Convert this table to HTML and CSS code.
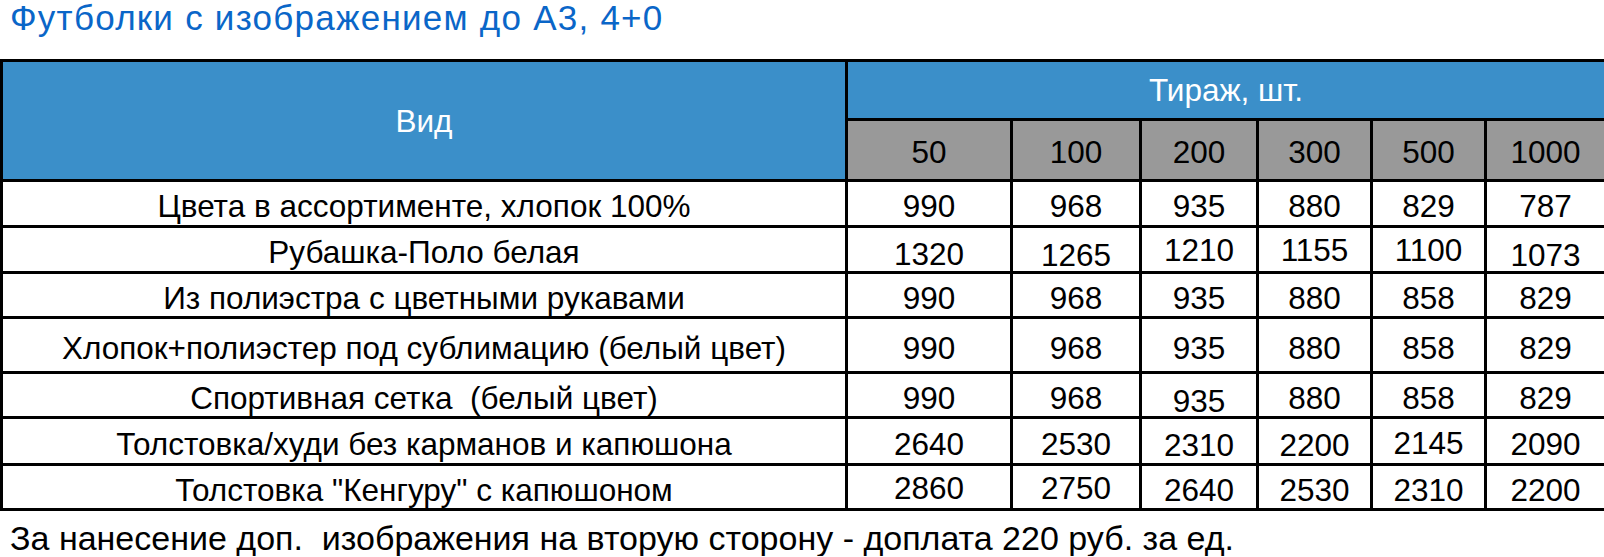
FILE: index.html
```html
<!DOCTYPE html>
<html lang="ru">
<head>
<meta charset="utf-8">
<title>Футболки с изображением до А3, 4+0</title>
<link rel="stylesheet" href="styles.css">
</head>
<body>
<div class="page">
  <h1 class="title">Футболки с изображением до А3, 4+0</h1>
  <table class="price">
    <colgroup>
      <col class="c-name">
      <col class="c50">
      <col class="c100">
      <col class="c200">
      <col class="c300">
      <col class="c500">
      <col class="c1000">
    </colgroup>
    <thead>
      <tr class="r-head1">
        <th class="h-blue" rowspan="2">Вид</th>
        <th class="h-blue" colspan="6">Тираж, шт.</th>
      </tr>
      <tr class="r-head2">
        <th class="h-gray">50</th>
        <th class="h-gray">100</th>
        <th class="h-gray">200</th>
        <th class="h-gray">300</th>
        <th class="h-gray">500</th>
        <th class="h-gray">1000</th>
      </tr>
    </thead>
    <tbody>
      <tr class="r-std">
        <td class="name">Цвета в ассортименте, хлопок 100%</td>
        <td>990</td><td>968</td><td>935</td><td>880</td><td>829</td><td>787</td>
      </tr>
      <tr class="r-std2">
        <td class="name">Рубашка-Поло белая</td>
        <td class="lo1">1320</td><td class="lo2">1265</td><td class="hi">1210</td><td class="hi">1155</td><td class="hi">1100</td><td class="lo2">1073</td>
      </tr>
      <tr class="r-short">
        <td class="name">Из полиэстра с цветными рукавами</td>
        <td>990</td><td>968</td><td>935</td><td>880</td><td>858</td><td>829</td>
      </tr>
      <tr class="r-tall">
        <td class="name">Хлопок+полиэстер под сублимацию (белый цвет)</td>
        <td>990</td><td>968</td><td>935</td><td>880</td><td>858</td><td>829</td>
      </tr>
      <tr class="r-short">
        <td class="name">Спортивная сетка  (белый цвет)</td>
        <td>990</td><td>968</td><td class="lo2">935</td><td>880</td><td>858</td><td>829</td>
      </tr>
      <tr class="r-mid">
        <td class="name">Толстовка/худи без карманов и капюшона</td>
        <td>2640</td><td>2530</td><td class="lo0">2310</td><td class="lo0">2200</td><td class="hi0">2145</td><td>2090</td>
      </tr>
      <tr class="r-short">
        <td class="name">Толстовка "Кенгуру" с капюшоном</td>
        <td class="hi">2860</td><td class="hi">2750</td><td>2640</td><td>2530</td><td>2310</td><td>2200</td>
      </tr>
    </tbody>
  </table>
  <p class="note">За нанесение доп.  изображения на вторую сторону - доплата 220 руб. за ед.</p>
</div>
</body>
</html>
```
FILE: styles.css
```css
html, body {
  margin: 0;
  padding: 0;
  background: #ffffff;
}

.page {
  width: 1604px;
  font-family: "Liberation Sans", Arial, sans-serif;
  color: #000000;
}

.title {
  box-sizing: border-box;
  height: 59px;
  margin: 0;
  padding: 0 0 0 10px;
  font-size: 35px;
  line-height: 35px;
  letter-spacing: 1.25px;
  font-weight: normal;
  color: #0a66c8;
  white-space: nowrap;
}

.price {
  width: 1604px;
  table-layout: fixed;
  border-collapse: collapse;
  border: 3px solid #000000;
  font-size: 31.5px;
  line-height: 28px;
}

.c-name { width: 845px; }
.c50 { width: 165px; }
.c100 { width: 129px; }
.c200 { width: 117px; }
.c300 { width: 114px; }
.c500 { width: 114px; }
.c1000 { width: 120px; }

.price th,
.price td {
  border: 3px solid #000000;
  padding: 5px 0 0 0;
  text-align: center;
  vertical-align: middle;
  font-weight: normal;
  white-space: pre;
  overflow: hidden;
}

.h-blue {
  background: #3b8fc9;
  color: #ffffff;
}

.price th.h-blue { padding-top: 0; }

.h-gray {
  background: #999999;
  color: #000000;
}

.price th.h-gray { padding-top: 3px; }

.r-head1 { height: 59px; }
.r-head2 { height: 61px; }
.r-std { height: 46px; }
.r-std2 { height: 46px; }
.r-short { height: 45px; }
.r-tall { height: 55px; }
.r-mid { height: 47px; }

.price td.lo0 { padding-top: 7px; }
.price td.lo1 { padding-top: 8px; }
.price td.lo2 { padding-top: 11px; }
.price td.hi0 { padding-top: 3px; }
.price td.hi { padding-top: 1px; }

.note {
  margin: 9px 0 0 0;
  padding-left: 10px;
  font-size: 34px;
  line-height: 36px;
  white-space: pre;
}
```
